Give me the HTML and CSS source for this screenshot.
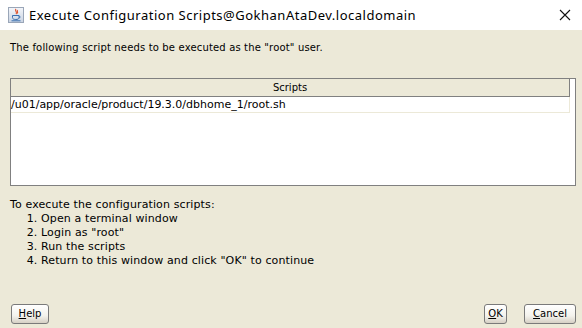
FILE: index.html
```html
<!DOCTYPE html>
<html>
<head>
<meta charset="utf-8">
<link rel="stylesheet" href="styles.css">
</head>
<body>
<div class="window">
  <div class="titlebar">
    <svg class="app-icon" width="16" height="16" viewBox="0 0 16 16">
      <defs>
        <linearGradient id="ig" x1="0" y1="0" x2="0" y2="1">
          <stop offset="0" stop-color="#f4f6fa"/>
          <stop offset="1" stop-color="#c9d3e2"/>
        </linearGradient>
      </defs>
      <rect x="0.5" y="0.5" width="15" height="15" fill="url(#ig)" stroke="#9aa6b8"/>
      <path d="M8 2 C6 4 10 5 8 7 M9.5 3 C8.5 4.5 10.5 5 9.3 6.5" stroke="#e0502a" stroke-width="1.1" fill="none"/>
      <path d="M4.5 8.5 H11 V10.5 C11 12 9.5 12.5 7.8 12.5 C6 12.5 4.5 12 4.5 10.5 Z" fill="none" stroke="#3a6fb0" stroke-width="1"/>
      <path d="M11 9 C12.5 9 12.5 11 11 11" fill="none" stroke="#3a6fb0" stroke-width="0.9"/>
      <path d="M3.5 13.8 H12.5" stroke="#3a6fb0" stroke-width="1"/>
    </svg>
    <span class="title">Execute Configuration Scripts@GokhanAtaDev.localdomain</span>
    <svg class="close" width="12" height="12" viewBox="0 0 12 12">
      <path d="M1 1 L11 11 M11 1 L1 11" stroke="#111" stroke-width="1.1"/>
    </svg>
  </div>
  <div class="content">
    <p class="intro">The following script needs to be executed as the "root" user.</p>
    <div class="table-box">
      <div class="table">
        <div class="th">Scripts</div>
        <div class="td">/u01/app/oracle/product/19.3.0/dbhome_1/root.sh</div>
      </div>
    </div>
    <div class="steps">
      <p>To execute the configuration scripts:</p>
      <ol>
        <li>Open a terminal window</li>
        <li>Login as "root"</li>
        <li>Run the scripts</li>
        <li>Return to this window and click "OK" to continue</li>
      </ol>
    </div>
    <div class="buttons">
      <button class="btn help"><u>H</u>elp</button>
      <div class="right">
        <button class="btn ok"><u>O</u>K</button>
        <button class="btn cancel"><u>C</u>ancel</button>
      </div>
    </div>
  </div>
</div>
</body>
</html>
```
FILE: styles.css
```css
html, body {
  margin: 0;
  padding: 0;
}
body {
  width: 582px;
  height: 328px;
  overflow: hidden;
  background: #ece9d8;
}
.window {
  display: flex;
  flex-direction: column;
  height: 328px;
}
.titlebar {
  height: 30px;
  flex: none;
  background: #ffffff;
  display: flex;
  align-items: center;
  padding: 0 11px 0 8px;
  box-sizing: border-box;
}
.app-icon {
  flex: none;
  margin-right: 5px;
}
.title {
  font-family: "Noto Sans", "DejaVu Sans", sans-serif;
  font-size: 13px;
  letter-spacing: 0.5px;
  color: #000;
  flex: 1;
}
.close {
  flex: none;
}
.content {
  flex: 1;
  display: flex;
  flex-direction: column;
  padding: 10px 6px 4px 10px;
  font-family: "DejaVu Sans", sans-serif;
  font-size: 10px;
  color: #000;
}
.intro {
  margin: 1px 0 0 0;
  line-height: 13px;
  letter-spacing: 0.16px;
}
.table-box {
  margin-top: 24px;
  height: 108px;
  border: 1px solid #808080;
  background: #fff;
  box-sizing: border-box;
  width: 566px;
}
.table {
  width: 559px;
}
.th {
  height: 17px;
  line-height: 17px;
  background: #ece9d8;
  border-right: 1px solid #808080;
  border-bottom: 1px solid #808080;
  text-align: center;
  font-size: 10px;
}
.td {
  height: 15px;
  line-height: 15px;
  border-right: 1px solid #ece9d8;
  border-bottom: 1px solid #ece9d8;
  font-size: 11px;
}
.steps {
  margin-top: 12px;
  line-height: 14px;
  font-size: 11px;
  letter-spacing: 0.12px;
}
.steps p {
  margin: 0;
}
.steps ol {
  margin: 0;
  padding-left: 31px;
}
.buttons {
  margin-top: auto;
  display: flex;
  justify-content: space-between;
  align-items: flex-end;
  padding-left: 1px;
}
.right {
  display: flex;
  gap: 17px;
}
.btn {
  height: 20px;
  box-sizing: border-box;
  border: 1px solid #7a7a7a;
  border-radius: 3px;
  background: linear-gradient(#ffffff, #f3f2ec 60%, #d6d0c5);
  font-family: "DejaVu Sans", sans-serif;
  font-size: 10px;
  color: #000;
  padding: 0;
  line-height: 18px;
}
.btn.help { width: 38px; }
.btn.ok { width: 23px; }
.btn.cancel { width: 52px; }
```
